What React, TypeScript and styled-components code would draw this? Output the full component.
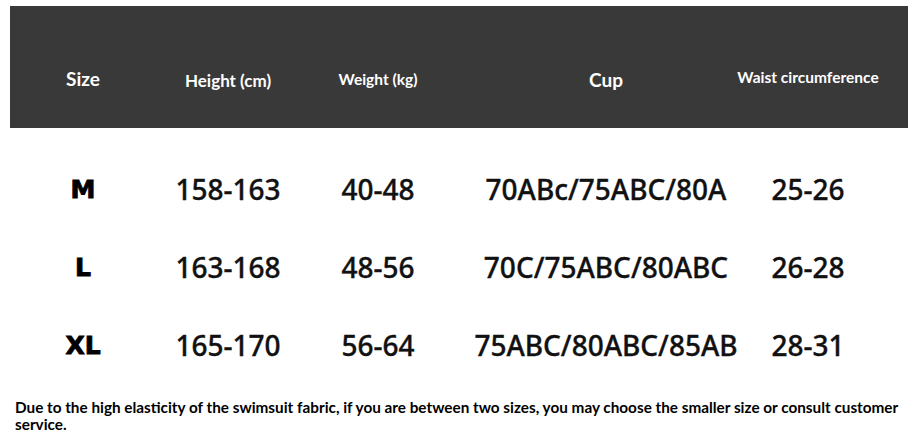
import styled, { createGlobalStyle } from "styled-components";

const GlobalStyle = createGlobalStyle`
  html, body {
    margin: 0;
    padding: 0;
    background: #ffffff;
  }
`;

const Page = styled.div`
  width: 923px;
  height: 446px;
  overflow: hidden;
  background: #ffffff;
  padding-top: 6px;
  box-sizing: border-box;
`;

const COLS = "146px 144px 156px 300px 104px 1fr";

const HeaderBar = styled.div`
  margin: 0 15px 0 10px;
  height: 122px;
  background: #393939;
  display: grid;
  grid-template-columns: ${COLS};
  align-items: center;
`;

const HeadCell = styled.div<{ $size: number; $dy?: number }>`
  display: flex;
  justify-content: center;
  white-space: nowrap;
  color: #ffffff;
  font-family: Lato, "Open Sans", sans-serif;
  font-weight: 700;
  font-size: ${(p) => p.$size}px;
  transform: translateY(${(p) => p.$dy ?? 0}px);
`;

const Body = styled.div`
  margin: 22px 15px 0 10px;
`;

const Row = styled.div`
  height: 78px;
  display: grid;
  grid-template-columns: ${COLS};
  align-items: center;
`;

const SizeCell = styled.div`
  display: flex;
  justify-content: center;
  font-family: "DejaVu Sans", sans-serif;
  font-weight: 700;
  font-size: 25px;
  color: #000000;
  -webkit-text-stroke: 0.9px #000000;
`;

const ValueCell = styled.div`
  display: flex;
  justify-content: center;
  white-space: nowrap;
  font-family: "Noto Sans", "Open Sans", sans-serif;
  font-weight: 500;
  font-size: 28px;
  color: #111111;
  -webkit-text-stroke: 0.35px #111111;
`;

const Note = styled.p`
  margin: 15px 0 0 15px;
  width: 895px;
  font-family: Lato, sans-serif;
  font-weight: 700;
  font-size: 15.3px;
  line-height: 17px;
  color: #000000;
`;

const rows = [
  { size: "M", height: "158-163", weight: "40-48", cup: "70ABc/75ABC/80A", waist: "25-26" },
  { size: "L", height: "163-168", weight: "48-56", cup: "70C/75ABC/80ABC", waist: "26-28" },
  { size: "XL", height: "165-170", weight: "56-64", cup: "75ABC/80ABC/85AB", waist: "28-31" },
];

export default function App() {
  return (
    <Page>
      <GlobalStyle />
      <HeaderBar>
        <HeadCell $size={19} $dy={11}>Size</HeadCell>
        <HeadCell $size={17} $dy={13}>Height (cm)</HeadCell>
        <HeadCell $size={15.5} $dy={12}>Weight (kg)</HeadCell>
        <HeadCell $size={19} $dy={12}>Cup</HeadCell>
        <HeadCell $size={15.5} $dy={10}>Waist circumference</HeadCell>
      </HeaderBar>
      <Body>
        {rows.map((r) => (
          <Row key={r.size}>
            <SizeCell>{r.size}</SizeCell>
            <ValueCell>{r.height}</ValueCell>
            <ValueCell>{r.weight}</ValueCell>
            <ValueCell>{r.cup}</ValueCell>
            <ValueCell>{r.waist}</ValueCell>
          </Row>
        ))}
      </Body>
      <Note>
        Due to the high elasticity of the swimsuit fabric, if you are between two sizes, you may choose the
        smaller size or consult customer service.
      </Note>
    </Page>
  );
}
